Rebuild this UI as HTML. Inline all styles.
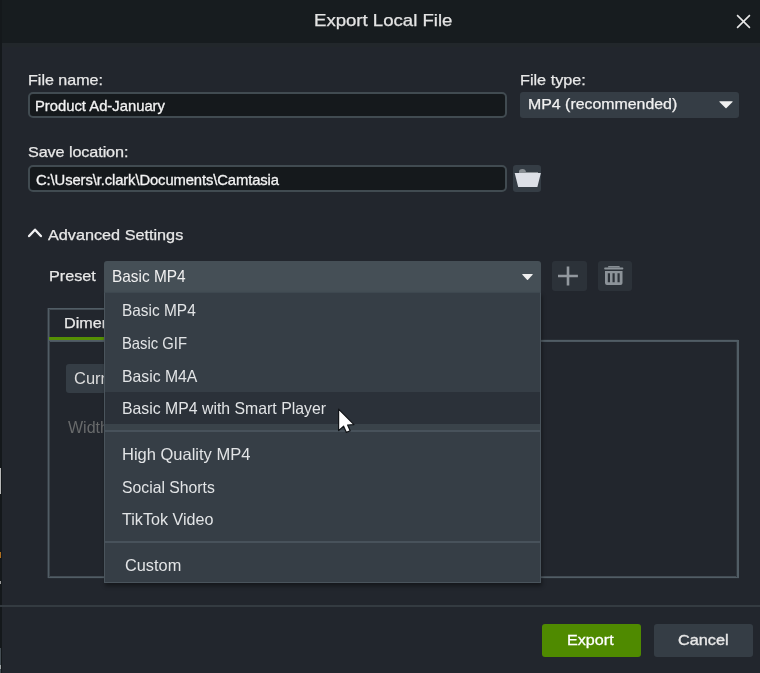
<!DOCTYPE html>
<html><head><meta charset="utf-8"><title>Export Local File</title>
<style>
*{box-sizing:border-box;margin:0;padding:0}
html,body{width:760px;height:673px;overflow:hidden;background:#22262d;font-family:"Liberation Sans",sans-serif;color:#e6e6e6}
#root{position:absolute;left:0;top:0;width:760px;height:673px;overflow:hidden;will-change:transform}
.abs{position:absolute}
.tx{position:absolute;white-space:nowrap;line-height:20px}
#edge{left:0;top:0;width:1.5px;height:673px;background:#14181b}
#title{left:0;top:0;width:760px;height:47px;background:#22272b;border-top:43.8px solid #171c1f}
.lbl{font-size:14.8px;transform-origin:0 50%;transform:scaleX(1.096);color:#e8e8e8;-webkit-text-stroke:0.25px #e8e8e8}
.inp{background:#15191c;border:2px solid #414b51;border-radius:5px}
.intx{font-size:13.9px;transform-origin:0 50%;transform:scaleX(1.065);color:#f2f2f2;-webkit-text-stroke:0.3px #f2f2f2}
.sel{background:#353d45;border-radius:3px}
.btn{background:#2c3239;border-radius:3px}
.mi{font-size:16.5px;color:#e2e4e6;transform-origin:0 50%}
</style></head><body><div id="root">
<div class="abs" id="title"></div>
<div class="tx" id="t_title" style="-webkit-text-stroke:0.25px #e4e4e4;left:313.8px;top:9.6px;font-size:16.2px;transform-origin:0 50%;transform:scaleX(1.148);color:#e4e4e4">Export Local File</div>
<svg class="abs" style="left:736px;top:13.9px" width="15" height="15" viewBox="0 0 15 15"><path d="M1.1 1.1 L13.9 13.9 M13.9 1.1 L1.1 13.9" stroke="#e8e8e8" stroke-width="1.55" fill="none"/></svg>
<div class="abs" id="edge"></div>
<div class="abs" style="left:0;top:468px;width:1px;height:26px;background:#b8b8b8"></div>
<div class="abs" style="left:0;top:552px;width:1px;height:6px;background:#b07020"></div>
<div class="abs" style="left:0;top:581px;width:1px;height:3px;background:#9a9a9a"></div>
<div class="abs" style="left:0;top:648px;width:1.3px;height:25px;background:#454e54"></div>
<div class="abs" style="left:0;top:665px;width:1px;height:4px;background:#a0a4a6"></div>

<div class="tx lbl" id="t_fname" style="transform:scaleX(1.086);left:27.5px;top:69.5px">File name:</div>
<div class="abs inp" style="left:28px;top:92px;width:479px;height:26px"></div>
<div class="tx intx" id="t_prod" style="left:35px;top:96px">Product Ad-January</div>
<div class="tx lbl" id="t_ftype" style="left:520px;top:69.5px">File type:</div>
<div class="abs sel" style="left:520px;top:92px;width:219px;height:26px"></div>
<div class="tx" id="t_mp4rec" style="-webkit-text-stroke:0.25px #f0f0f0;transform:scaleX(1.144);left:528.1px;top:93.5px;font-size:13.9px;transform-origin:0 50%;color:#f0f0f0">MP4 (recommended)</div>
<svg class="abs" style="left:718.6px;top:101px" width="14" height="7.6" viewBox="0 0 14 8" preserveAspectRatio="none"><path d="M0.8 0.3 H13.2 Q14 0.4 13.5 1 L7.5 7.5 Q7 8 6.5 7.5 L0.5 1 Q0 0.4 0.8 0.3 Z" fill="#f0f0f0"/></svg>

<div class="tx lbl" id="t_save" style="letter-spacing:-0.1px;left:27.5px;top:142.1px">Save location:</div>
<div class="abs inp" style="left:28px;top:165px;width:479px;height:27px"></div>
<div class="tx intx" id="t_path" style="letter-spacing:-0.1px;left:35.5px;top:169.9px">C:\Users\r.clark\Documents\Camtasia</div>
<div class="abs sel" style="left:513px;top:165px;width:28px;height:27px;border-radius:3px"></div>
<svg class="abs" style="left:513px;top:165px" width="28" height="27" viewBox="0 0 28 27"><path d="M6 8.5 V6.8 Q6 4 9.5 4 Q12.6 4 13 7 H25 V8.5 Z" fill="#8a9095"/><path d="M1.7 8 H27.9 L24.4 22 H5.2 Z" fill="#dde0e7"/></svg>

<svg class="abs" style="left:27px;top:226px" width="16" height="13" viewBox="0 0 16 13"><path d="M2.1 10 L8 3.7 L13.9 10" stroke="#f0f0f2" stroke-width="2.4" stroke-linecap="round" stroke-linejoin="round" fill="none"/></svg>
<div class="tx lbl" id="t_adv" style="left:47.5px;top:225px">Advanced Settings</div>

<div class="tx lbl" id="t_preset" style="left:49px;top:265.6px">Preset</div>
<div class="abs" style="left:104px;top:261.4px;width:437px;height:30.6px;background:#454f56;border-radius:3px 3px 0 0"></div>
<div class="tx" id="t_selbasic" style="transform:scaleX(0.906);left:112px;top:267px;font-size:17px;transform-origin:0 50%;color:#f0f0f0">Basic MP4</div>
<svg class="abs" style="left:522px;top:274px" width="11" height="6" viewBox="0 0 11 6"><path d="M0.6 0 H10.4 Q11 0.2 10.6 0.7 L6 5.7 Q5.5 6.1 5 5.7 L0.4 0.7 Q0 0.2 0.6 0 Z" fill="#f0f0f0"/></svg>
<div class="abs btn" style="left:552px;top:261.4px;width:35px;height:30px"></div>
<svg class="abs" style="left:558.2px;top:265.5px" width="20" height="20" viewBox="0 0 20 20"><path d="M10 0.5 V19.6 M0 10 H19.9" stroke="#92989e" stroke-width="2.6" fill="none"/></svg>
<div class="abs btn" style="left:598px;top:261.4px;width:34px;height:30px"></div>
<svg class="abs" style="left:604px;top:265px" width="20" height="22" viewBox="0 0 20 22"><path d="M4.4 1 H15.4 L16 2.5 H3.8 Z" fill="#858c92"/><rect x="0.2" y="2.4" width="19.1" height="2.2" rx="0.8" fill="#8c9399"/><path d="M1 6 H18.5 V18.1 Q18.5 20.1 16.5 20.1 H3 Q1 20.1 1 18.1 Z M3.8 8.2 V17.3 H6 V8.2 Z M8.5 8.2 V17.3 H10.7 V8.2 Z M13.5 8.2 V17.3 H15.7 V8.2 Z" fill="#8c9399" fill-rule="evenodd"/></svg>

<!-- tab + panel -->
<div class="abs" style="left:47px;top:308px;width:1px;height:270px;background:rgba(81,93,101,0.4)"></div>
<div class="abs" style="left:48px;top:308px;width:1px;height:270px;background:rgba(81,93,101,1)"></div>
<div class="abs" style="left:49px;top:309px;width:1px;height:268px;background:rgba(81,93,101,0.5)"></div>
<div class="abs" style="left:49px;top:308px;width:58px;height:1px;background:rgba(81,93,101,1)"></div>
<div class="abs" style="left:50px;top:309px;width:57px;height:1px;background:rgba(81,93,101,0.7)"></div>
<div class="abs" style="left:49px;top:340px;width:689px;height:1px;background:rgba(81,93,101,1)"></div>
<div class="abs" style="left:50px;top:341px;width:687px;height:1px;background:rgba(81,93,101,0.9)"></div>
<div class="abs" style="left:49px;top:339px;width:689px;height:1px;background:rgba(81,93,101,0.15)"></div>
<div class="abs" style="left:736px;top:341px;width:1px;height:236px;background:rgba(81,93,101,0.3)"></div>
<div class="abs" style="left:737px;top:340px;width:2px;height:238px;background:rgba(81,93,101,1)"></div>
<div class="abs" style="left:50px;top:576px;width:686px;height:1px;background:rgba(81,93,101,0.7)"></div>
<div class="abs" style="left:49px;top:577px;width:688px;height:1px;background:rgba(81,93,101,1)"></div>
<div class="abs" style="left:48px;top:578px;width:691px;height:1px;background:rgba(81,93,101,0.12)"></div>
<div class="abs" style="left:49px;top:337px;width:58px;height:3px;background:#558f04"></div>
<div class="tx lbl" id="t_dim" style="left:63.5px;top:313px;width:42px;overflow:hidden">Dimensions</div>
<div class="abs sel" style="left:65.5px;top:364px;width:60px;height:29px"></div>
<div class="tx" id="t_curr" style="left:74px;top:367.5px;width:32px;overflow:hidden;font-size:16.5px;color:#dcdcdc">Current</div>
<div class="tx" id="t_width" style="left:68px;top:418px;font-size:16px;color:#686a6b">Width</div>

<!-- dropdown -->
<div class="abs" id="menu" style="left:104px;top:291.7px;width:437px;height:291px;background:#363e46;border:1.5px solid #4a545c;border-top:1.6px solid #3e4850;box-shadow:1px 3px 4px rgba(0,0,0,.4)"></div>
<div class="abs" style="left:105px;top:392px;width:434.5px;height:32.2px;background:#2b3139"></div>
<div class="abs" style="left:105px;top:424.2px;width:434.5px;height:6px;background:#3a434a"></div>
<div class="abs" style="left:105px;top:430.2px;width:435px;height:1.6px;background:#48525b"></div>
<div class="abs" style="left:105px;top:541px;width:435px;height:1.6px;background:#48525b"></div>
<div class="tx mi" id="m1" style="transform:scaleX(0.935);left:122px;top:300px">Basic MP4</div>
<div class="tx mi" id="m2" style="transform:scaleX(0.897);left:122px;top:333px">Basic GIF</div>
<div class="tx mi" id="m3" style="transform:scaleX(0.956);left:122px;top:366px">Basic M4A</div>
<div class="tx mi" id="m4" style="transform:scaleX(0.959);left:122px;top:398px">Basic MP4 with Smart Player</div>
<div class="tx mi" id="m5" style="transform:scaleX(1.0);left:122px;top:444px">High Quality MP4</div>
<div class="tx mi" id="m6" style="transform:scaleX(0.955);left:122px;top:476.5px">Social Shorts</div>
<div class="tx mi" id="m7" style="transform:scaleX(0.978);left:122px;top:508.5px">TikTok Video</div>
<div class="tx mi" id="m8" style="transform:scaleX(0.989);left:124.5px;top:555px">Custom</div>
<!-- cursor -->
<svg class="abs" style="left:335px;top:405px" width="24" height="32" viewBox="0 0 24 32"><path d="M3.6 4.2 V25.6 L8.6 21.2 L11.4 27.4 L15.2 25.8 L12.6 20 L19 19.6 Z" fill="#fff" stroke="#111418" stroke-width="1.2" stroke-linejoin="round"/></svg>

<div class="abs" style="left:0;top:605px;width:760px;height:2px;background:#343b41"></div>
<div class="abs" style="left:542px;top:623.6px;width:98.8px;height:33.2px;background:#4f8a00;border-radius:3px"></div>
<div class="tx" id="t_export" style="-webkit-text-stroke:0.3px #fff;left:567px;top:630px;font-size:14.8px;transform-origin:0 50%;transform:scaleX(1.09);color:#fff">Export</div>
<div class="abs" style="left:654px;top:623.6px;width:99.2px;height:33.2px;background:#353d45;border-radius:3px"></div>
<div class="tx" id="t_cancel" style="-webkit-text-stroke:0.35px #e8e8e8;left:677.7px;top:630px;font-size:14.8px;transform-origin:0 50%;transform:scaleX(1.1);color:#e8e8e8">Cancel</div>
</div></body></html>
